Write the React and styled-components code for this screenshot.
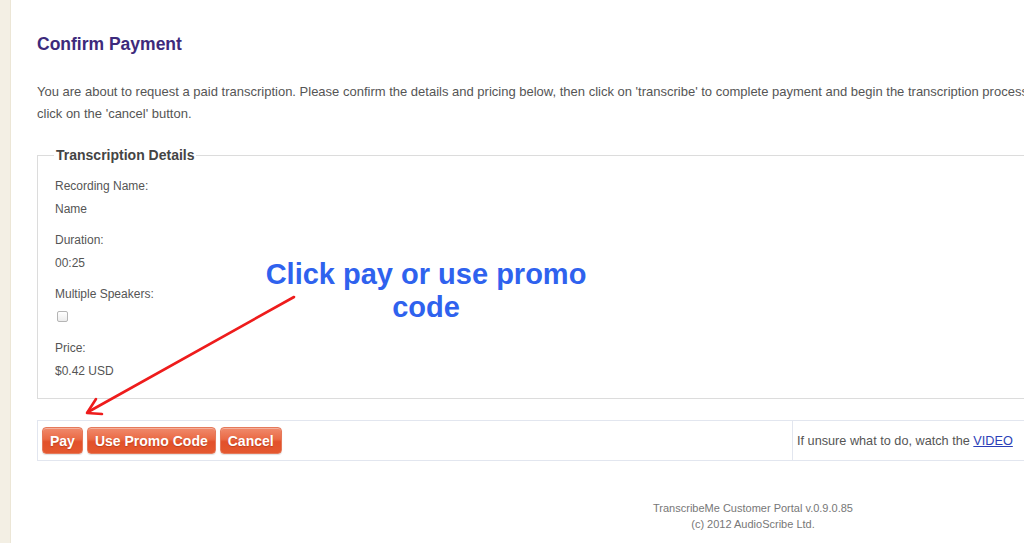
import React from 'react'
// style
import styled, { createGlobalStyle } from 'styled-components'

const GlobalStyle = createGlobalStyle`
    html, body {
        margin: 0;
        padding: 0;
        background: #fff;
        overflow: hidden;
    }
    body {
        font-family: "Liberation Sans", Arial, sans-serif;
        color: #555;
    }
`

const details = [
    { label: 'Recording Name:', value: 'Name' },
    { label: 'Duration:', value: '00:25' },
    { label: 'Multiple Speakers:', checkbox: true },
    { label: 'Price:', value: '$0.42 USD' },
]

const App = () => {
    return (
        <>
            <GlobalStyle />
            <StyledPage>
                <StyledStrip />
                <StyledMain>
                    <StyledTitle>Confirm Payment</StyledTitle>
                    <StyledIntro>
                        You are about to request a paid transcription. Please confirm the details and pricing below, then click on 'transcribe' to complete payment and begin the transcription process.
                        <br />
                        click on the 'cancel' button.
                    </StyledIntro>

                    <StyledFieldset>
                        <StyledLegend>Transcription Details</StyledLegend>
                        {details.map((item) => (
                            <StyledGroup key={item.label}>
                                <StyledLine>{item.label}</StyledLine>
                                <StyledLine>
                                    {item.checkbox ? <StyledCheck /> : item.value}
                                </StyledLine>
                            </StyledGroup>
                        ))}
                    </StyledFieldset>

                    <StyledBar>
                        <StyledActions>
                            <StyledButton>Pay</StyledButton>
                            <StyledButton>Use Promo Code</StyledButton>
                            <StyledButton>Cancel</StyledButton>
                        </StyledActions>
                        <StyledHelp>
                            If unsure what to do, watch the <a href="#video">VIDEO</a>
                        </StyledHelp>
                    </StyledBar>

                    <StyledFooter>
                        <div>TranscribeMe Customer Portal v.0.9.0.85</div>
                        <div>(c) 2012 AudioScribe Ltd.</div>
                    </StyledFooter>
                </StyledMain>

                {/* annotation overlay */}
                <StyledNote>Click pay or use promo code</StyledNote>
                <StyledArrow width="320" height="430" viewBox="0 0 320 430">
                    <g stroke="#ee1c1c" strokeWidth="2.6" fill="none" strokeLinecap="round" strokeLinejoin="round">
                        <line x1="294" y1="297" x2="88" y2="412" />
                        <polyline points="96,399 87,413 102,414" />
                    </g>
                </StyledArrow>
            </StyledPage>
        </>
    )
}

const StyledPage = styled.div`
    position: relative;
    display: flex;
    width: 1500px;
    min-height: 543px;
`

const StyledStrip = styled.div`
    width: 10px;
    flex-shrink: 0;
    background: #f3efe4;
    border-right: 1px solid #ece6d6;
`

const StyledMain = styled.div`
    width: 1432px;
    padding-left: 26px;
    padding-top: 33px;
`

const StyledTitle = styled.h2`
    margin: 0;
    font-size: 17.5px;
    line-height: 22px;
    font-weight: bold;
    color: #3d2a7c;
`

const StyledIntro = styled.p`
    margin: 26px 0 0;
    font-size: 13px;
    line-height: 22px;
    color: #555;
    white-space: nowrap;
`

const StyledFieldset = styled.fieldset`
    margin: 21px 0 0;
    padding: 10px 17px 16px;
    border: 1px solid #dcdcdc;
    border-right: none;
`

const StyledLegend = styled.legend`
    margin-left: -1px;
    padding: 0 2px;
    font-size: 14px;
    line-height: 18px;
    font-weight: bold;
    color: #444;
`

const StyledGroup = styled.div`
    & + & {
        margin-top: 8px;
    }
`

const StyledLine = styled.div`
    height: 23px;
    display: flex;
    align-items: center;
    font-size: 12px;
    color: #555;
`

const StyledCheck = styled.span`
    display: inline-block;
    margin-left: 2px;
    width: 9px;
    height: 9px;
    border: 1px solid #b5b5b5;
    border-radius: 2px;
    background: linear-gradient(#fff, #ececec);
`

const StyledBar = styled.div`
    margin-top: 21px;
    height: 39px;
    display: flex;
    border: 1px solid #e2e6ef;
    border-right: none;
`

const StyledActions = styled.div`
    width: 750px;
    display: flex;
    align-items: center;
    gap: 4px;
    padding-left: 4px;
`

const StyledButton = styled.button`
    height: 27px;
    padding: 0 7px;
    font-family: "Liberation Sans", Arial, sans-serif;
    font-size: 14px;
    font-weight: bold;
    color: #fff;
    text-shadow: 0 1px 1px rgba(120, 30, 0, 0.35);
    background: linear-gradient(#f08a6c 0%, #ea6a45 45%, #e2512b 55%, #e4582f 100%);
    border: 1px solid #e5795a;
    border-radius: 4px;
    box-shadow: inset 0 1px 0 rgba(255, 255, 255, 0.35), 0 1px 1px rgba(0, 0, 0, 0.12);
`

const StyledHelp = styled.div`
    flex: 1;
    display: flex;
    align-items: center;
    padding-left: 4px;
    border-left: 1px solid #e2e6ef;
    font-size: 12.7px;
    color: #555;
    white-space: pre;

    a {
        color: #2c3fb8;
        text-decoration: underline;
    }
`

const StyledFooter = styled.div`
    margin-top: 39px;
    text-align: center;
    font-size: 11px;
    line-height: 16px;
    color: #777;
`

const StyledNote = styled.div`
    position: absolute;
    left: 250px;
    top: 258px;
    width: 352px;
    text-align: center;
    font-family: "Liberation Sans", Arial, sans-serif;
    font-size: 29px;
    line-height: 33px;
    font-weight: bold;
    color: #2f62ee;
`

const StyledArrow = styled.svg`
    position: absolute;
    left: 0;
    top: 0;
    pointer-events: none;
`

export default App
